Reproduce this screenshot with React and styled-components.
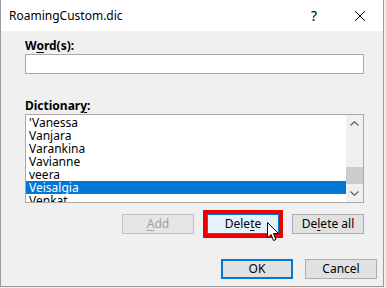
import styled, { createGlobalStyle } from 'styled-components';

const Global = createGlobalStyle`
    html, body {
        margin: 0;
        padding: 0;
        background: #f0f0f0;
    }
    body {
        font-family: "Segoe UI", "Noto Sans", "Liberation Sans", sans-serif;
        font-size: 12px;
    }
`

const Dialog = styled.div`
    position: relative;
    width: 384px;
    height: 287px;
    box-sizing: border-box;
    border-left: 1px solid #9a9a9a;
    border-right: 1px solid #9a9a9a;
    border-bottom: 1px solid #9a9a9a;
    background: #f0f0f0;
    display: flex;
    flex-direction: column;
    overflow: hidden;
`

const TitleBar = styled.div`
    height: 31px;
    background: #ffffff;
    display: flex;
    align-items: center;
    padding-left: 8px;
    color: #000;
`

const Title = styled.div`
    flex: 1;
    font-size: 12px;
`

const TitleBtn = styled.div`
    width: 46px;
    height: 31px;
    display: flex;
    align-items: center;
    justify-content: center;
    font-size: 14px;
`

const Body = styled.div`
    flex: 1;
    padding: 7px 0 0 24px;
    display: flex;
    flex-direction: column;
`

const Label = styled.div`
    font-weight: bold;
    height: 16px;
    line-height: 16px;
    color: #000;
    margin-top: ${p => p.$top || 0}px;
`

const U = styled.span`
    text-decoration: underline;
    text-underline-offset: 2px;
`

const Input = styled.div`
    width: 339px;
    height: 20px;
    box-sizing: border-box;
    border: 1px solid #a9a9a9;
    background: #fff;
`

const ListBox = styled.div`
    width: 339px;
    height: 89px;
    box-sizing: border-box;
    border: 1px solid #a9a9a9;
    background: #fff;
    display: flex;
    overflow: hidden;
`

const Items = styled.div`
    flex: 1;
    padding-top: 1px;
    overflow: hidden;
`

const Item = styled.div`
    height: 13px;
    line-height: 13px;
    padding-left: 3px;
    background: ${p => (p.$sel ? '#0078d7' : 'transparent')};
    color: ${p => (p.$sel ? '#fff' : '#000')};
    white-space: nowrap;
`

const ScrollBar = styled.div`
    width: 17px;
    background: #f0f0f0;
    display: flex;
    flex-direction: column;
    align-items: stretch;
`

const Arrow = styled.div`
    height: 17px;
    display: flex;
    align-items: center;
    justify-content: center;
`

const Track = styled.div`
    flex: 1;
    display: flex;
    flex-direction: column;
    justify-content: flex-end;
    padding-bottom: 1px;
`

const Thumb = styled.div`
    height: 17px;
    background: #cdcdcd;
`

const ButtonRow = styled.div`
    display: flex;
    gap: 13px;
    justify-content: flex-end;
    width: 339px;
    margin-top: ${p => p.$top || 0}px;
    padding-right: ${p => p.$pr || 0}px;
    box-sizing: border-box;
`

const Button = styled.div`
    width: 72px;
    height: 20px;
    box-sizing: border-box;
    border: ${p => (p.$default ? '2px solid #0078d7' : p.$hover ? '1px solid #0078d7' : p.$disabled ? '1px solid #bfbfbf' : '1px solid #adadad')};
    background: ${p => (p.$hover ? '#e5f1fb' : p.$disabled ? '#e6e6e6' : '#e1e1e1')};
    color: ${p => (p.$disabled ? '#a0a0a0' : '#000')};
    display: flex;
    align-items: center;
    justify-content: center;
    outline: ${p => (p.$marked ? '4px solid #ee0000' : 'none')};
    line-height: 1;
`

const BottomRow = styled.div`
    display: flex;
    justify-content: flex-end;
    gap: 12px;
    padding-right: 6px;
    margin-top: 25px;
`

const Cursor = styled.svg`
    position: absolute;
    left: 266px;
    top: 222px;
`

const words = ["'Vanessa", 'Vanjara', 'Varankina', 'Vavianne', 'veera', 'Veisalgia', 'Venkat'];

const App = () => {
    return (
        <>
            <Global />
            <Dialog>
                <TitleBar>
                    <Title>RoamingCustom.dic</Title>
                    <TitleBtn>?</TitleBtn>
                    <TitleBtn>
                        <svg width="12" height="12" viewBox="0 0 12 12">
                            <path d="M1 1L11 11M11 1L1 11" stroke="#000" strokeWidth="1" />
                        </svg>
                    </TitleBtn>
                </TitleBar>
                <Body>
                    <Label $top={0}>W<U>o</U>rd(s):</Label>
                    <Input />
                    <Label $top={24}>Dictionar<U>y</U>:</Label>
                    <ListBox>
                        <Items>
                            {words.map(w => (
                                <Item key={w} $sel={w === 'Veisalgia'}>{w}</Item>
                            ))}
                        </Items>
                        <ScrollBar>
                            <Arrow>
                                <svg width="9" height="5" viewBox="0 0 9 5">
                                    <path d="M0.5 4.5L4.5 0.8L8.5 4.5" stroke="#606060" fill="none" strokeWidth="1.2" />
                                </svg>
                            </Arrow>
                            <Track>
                                <Thumb />
                            </Track>
                            <Arrow>
                                <svg width="9" height="5" viewBox="0 0 9 5">
                                    <path d="M0.5 0.5L4.5 4.2L8.5 0.5" stroke="#606060" fill="none" strokeWidth="1.2" />
                                </svg>
                            </Arrow>
                        </ScrollBar>
                    </ListBox>
                    <ButtonRow $top={11}>
                        <Button $disabled><U>A</U>dd</Button>
                        <Button $hover $marked>Dele<U>t</U>e</Button>
                        <Button>De<U>l</U>ete all</Button>
                    </ButtonRow>
                </Body>
                <BottomRow>
                    <Button $default>OK</Button>
                    <Button>Cancel</Button>
                </BottomRow>
                <div style={{ height: 9 }} />
                <Cursor width="13" height="20" viewBox="0 0 13 20">
                    <path d="M0.5 0.5L0.5 16L4 12.5L6.5 18.5L9 17.5L6.5 11.5L11.5 11.5Z" fill="#fff" stroke="#000" strokeWidth="1" />
                </Cursor>
            </Dialog>
        </>
    )
}

export default App;
